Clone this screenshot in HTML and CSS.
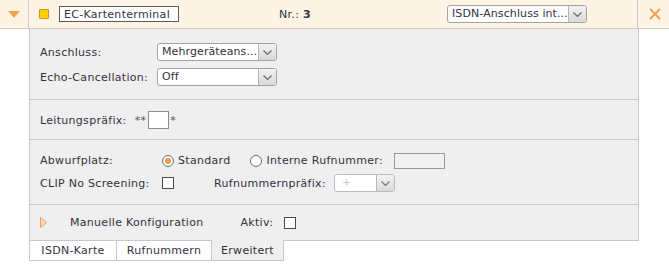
FILE: index.html
```html
<!DOCTYPE html>
<html lang="de">
<head>
<meta charset="UTF-8">
<meta name="viewport" content="width=device-width, initial-scale=1.0">
<title>EC-Kartenterminal</title>
<link rel="stylesheet" href="styles.css">
</head>
<body>

<div class="page">
    <div class="head">
        <div class="head-toggle">
            <svg width="12" height="7" viewBox="0 0 12 7"><polygon points="0,0 12,0 6,7" fill="#f3a54a"/></svg>
        </div>
        <div class="head-main">
            <span class="led"></span>
            <input class="name-input" type="text" value="EC-Kartenterminal">
            <span class="nr">Nr.: <b>3</b></span>
            <div class="select head-select">
                <span class="select-text">ISDN-Anschluss int...</span>
                <span class="select-btn"><svg width="9" height="5" viewBox="0 0 9 5"><polyline points="0.5,0.5 4.5,4.5 8.5,0.5" fill="none" stroke="#666" stroke-width="1.1"/></svg></span>
            </div>
        </div>
        <div class="head-close">
            <svg width="12" height="12" viewBox="0 0 12 12"><path d="M1 1 L11 11 M11 1 L1 11" stroke="#f3a04a" stroke-width="2"/></svg>
        </div>
    </div>

    <div class="panel">
        <div class="section sec-ports">
            <div class="row">
                <label class="lbl">Anschluss:</label>
                <div class="select w120">
                    <span class="select-text">Mehrgeräteans...</span>
                    <span class="select-btn"><svg width="9" height="5" viewBox="0 0 9 5"><polyline points="0.5,0.5 4.5,4.5 8.5,0.5" fill="none" stroke="#666" stroke-width="1.1"/></svg></span>
                </div>
            </div>
            <div class="row">
                <label class="lbl">Echo-Cancellation:</label>
                <div class="select w120">
                    <span class="select-text">Off</span>
                    <span class="select-btn"><svg width="9" height="5" viewBox="0 0 9 5"><polyline points="0.5,0.5 4.5,4.5 8.5,0.5" fill="none" stroke="#666" stroke-width="1.1"/></svg></span>
                </div>
            </div>
        </div>

        <div class="section sec-prefix">
            <div class="row">
                <label class="lbl-inline">Leitungspräfix:</label>
                <span class="stars">**</span><input class="prefix-input" type="text"><span class="star">*</span>
            </div>
        </div>

        <div class="section sec-drop">
            <div class="row">
                <label class="lbl wide">Abwurfplatz:</label>
                <span class="radio checked"></span>
                <span class="opt">Standard</span>
                <span class="radio second"></span>
                <span class="opt">Interne Rufnummer:</span>
                <input class="intern-input" type="text">
            </div>
            <div class="row">
                <label class="lbl wide">CLIP No Screening:</label>
                <span class="check"></span>
                <span class="opt prefix-lbl">Rufnummernpräfix:</span>
                <div class="select disabled w61">
                    <span class="select-text">+</span>
                    <span class="select-btn"><svg width="9" height="5" viewBox="0 0 9 5"><polyline points="0.5,0.5 4.5,4.5 8.5,0.5" fill="none" stroke="#777" stroke-width="1.1"/></svg></span>
                </div>
            </div>
        </div>

        <div class="section sec-manual">
            <div class="row">
                <svg class="expand" width="7" height="11" viewBox="0 0 7 11"><polygon points="0.5,0.5 6.5,5.5 0.5,10.5" fill="#fbdcb6" stroke="#eba35a" stroke-width="1"/></svg>
                <span class="manual-text">Manuelle Konfiguration</span>
                <span class="opt">Aktiv:</span>
                <span class="check"></span>
            </div>
        </div>
    </div>

    <div class="tabs">
        <div class="tab t1">ISDN-Karte</div>
        <div class="tab t2">Rufnummern</div>
        <div class="tab active">Erweitert</div>
    </div>
</div>

</body>
</html>
```

FILE: styles.css
```css
body {
    margin: 0;
    font-family: "DejaVu Sans", Verdana, sans-serif;
    font-size: 11px;
    letter-spacing: 0.3px;
    color: #35313f;
    background: #fff;
}

.page {
    width: 669px;
}

/* header bar */

.head {
    display: flex;
    height: 28px;
    background-color: #fdf4e5;
    border-bottom: 1px solid #cfcac2;
}

.head-toggle {
    width: 29px;
    border-right: 1px solid #cfcac2;
    display: flex;
    align-items: center;
    justify-content: center;
    padding-right: 1px;
    box-sizing: border-box;
}

.head-toggle svg {
    margin-left: 1px;
    margin-top: 1px;
}

.head-main {
    width: 609px;
    border-right: 1px solid #cfcac2;
    display: flex;
    align-items: center;
    padding-left: 10px;
    box-sizing: border-box;
}

.head-close {
    flex: 1;
    display: flex;
    align-items: center;
    justify-content: center;
    padding-left: 2px;
}

.led {
    width: 8px;
    height: 8px;
    background-color: #ffd000;
    border: 1px solid #c09a2a;
    border-radius: 1px;
}

.name-input {
    margin: 0 0 0 10px;
    width: 120px;
    height: 16px;
    box-sizing: border-box;
    border: 1px solid #5c5c5c;
    padding: 0 4px;
    font-family: inherit;
    font-size: 11px;
    letter-spacing: 0.3px;
    color: #35313f;
    background: #fff;
}

.nr {
    margin-left: 100px;
}

.nr b {
    font-weight: bold;
}

/* select boxes */

.select {
    display: flex;
    height: 18px;
    box-sizing: border-box;
    border: 1px solid #a3a3a3;
    border-radius: 3px;
    background: #fff;
    overflow: hidden;
}

.select-text {
    flex: 1;
    padding-left: 4px;
    line-height: 16px;
    letter-spacing: 0.1px;
    white-space: nowrap;
    overflow: hidden;
}

.select-btn {
    width: 17px;
    border-left: 1px solid #b5b5b5;
    background: linear-gradient(#f3f3f3, #d9d9d9);
    display: flex;
    align-items: center;
    justify-content: center;
}

.head-select {
    width: 140px;
    margin-left: auto;
    margin-right: 50px;
}

.w120 {
    width: 120px;
}

.w61 {
    width: 61px;
}

.select.disabled {
    border-color: #bdbdbd;
}

.select.disabled .select-text {
    color: #c4c4c4;
    padding-left: 7px;
}

/* panel */

.panel {
    margin-left: 29px;
    width: 610px;
    box-sizing: border-box;
    background-color: #efefef;
    border-left: 1px solid #c8c8c8;
    border-right: 1px solid #c8c8c8;
    border-bottom: 1px solid #c8c8c8;
}

.section {
    border-top: 1px solid #c8c8c8;
    padding-left: 10px;
    display: flex;
    flex-direction: column;
}

.section:first-child {
    border-top: none;
}

.sec-ports {
    padding-top: 14px;
    padding-bottom: 13px;
    gap: 7px;
}

.sec-prefix {
    padding-top: 11px;
    padding-bottom: 10px;
}

.sec-drop {
    padding-top: 12px;
    padding-bottom: 12px;
    gap: 5px;
}

.sec-manual {
    padding-top: 9px;
    padding-bottom: 9px;
}

.row {
    display: flex;
    align-items: center;
    min-height: 17px;
}

.lbl {
    width: 117px;
}

.lbl.wide {
    width: 122px;
}

.lbl-inline {
    margin-right: 8px;
}

.stars {
    color: #555;
}

.star {
    color: #555;
    margin-left: 1px;
}

.prefix-input {
    margin: 0 0 0 2px;
    width: 21px;
    height: 18px;
    box-sizing: border-box;
    border: 1px solid #8e8e8e;
    background: #fff;
    padding: 0;
}

.radio {
    width: 12px;
    height: 12px;
    box-sizing: border-box;
    border: 1px solid #6e6e6e;
    border-radius: 50%;
    background: #fff;
    display: flex;
    align-items: center;
    justify-content: center;
    margin-right: 4px;
}

.radio.checked::after {
    content: "";
    width: 6px;
    height: 6px;
    border-radius: 50%;
    background: #f29a43;
}

.radio.second {
    margin-left: 20px;
}

.intern-input {
    margin: 0 0 0 11px;
    width: 51px;
    height: 16px;
    box-sizing: border-box;
    border: 1px solid #9a9a9a;
    background: #f1f1f1;
    padding: 0;
}

.check {
    width: 12px;
    height: 12px;
    box-sizing: border-box;
    border: 1px solid #4a4a4a;
    background: #fff;
}

.prefix-lbl {
    margin-left: 40px;
    margin-right: 8px;
}

.expand {
    margin-right: 23px;
}

.manual-text {
    margin-right: 37px;
}

.sec-manual .opt {
    margin-right: 11px;
}

/* tabs */

.tabs {
    display: flex;
    margin-left: 29px;
}

.tab {
    height: 20px;
    line-height: 19px;
    box-sizing: border-box;
    text-align: center;
    background: #fff;
    border-right: 1px solid #c8c8c8;
    border-bottom: 1px solid #c8c8c8;
}

.tab.t1 {
    width: 88px;
    border-left: 1px solid #c8c8c8;
}

.tab.t2 {
    width: 95px;
}

.tab.active {
    width: 72px;
    background: #efefef;
    margin-top: -1px;
    height: 21px;
    line-height: 21px;
}
```
